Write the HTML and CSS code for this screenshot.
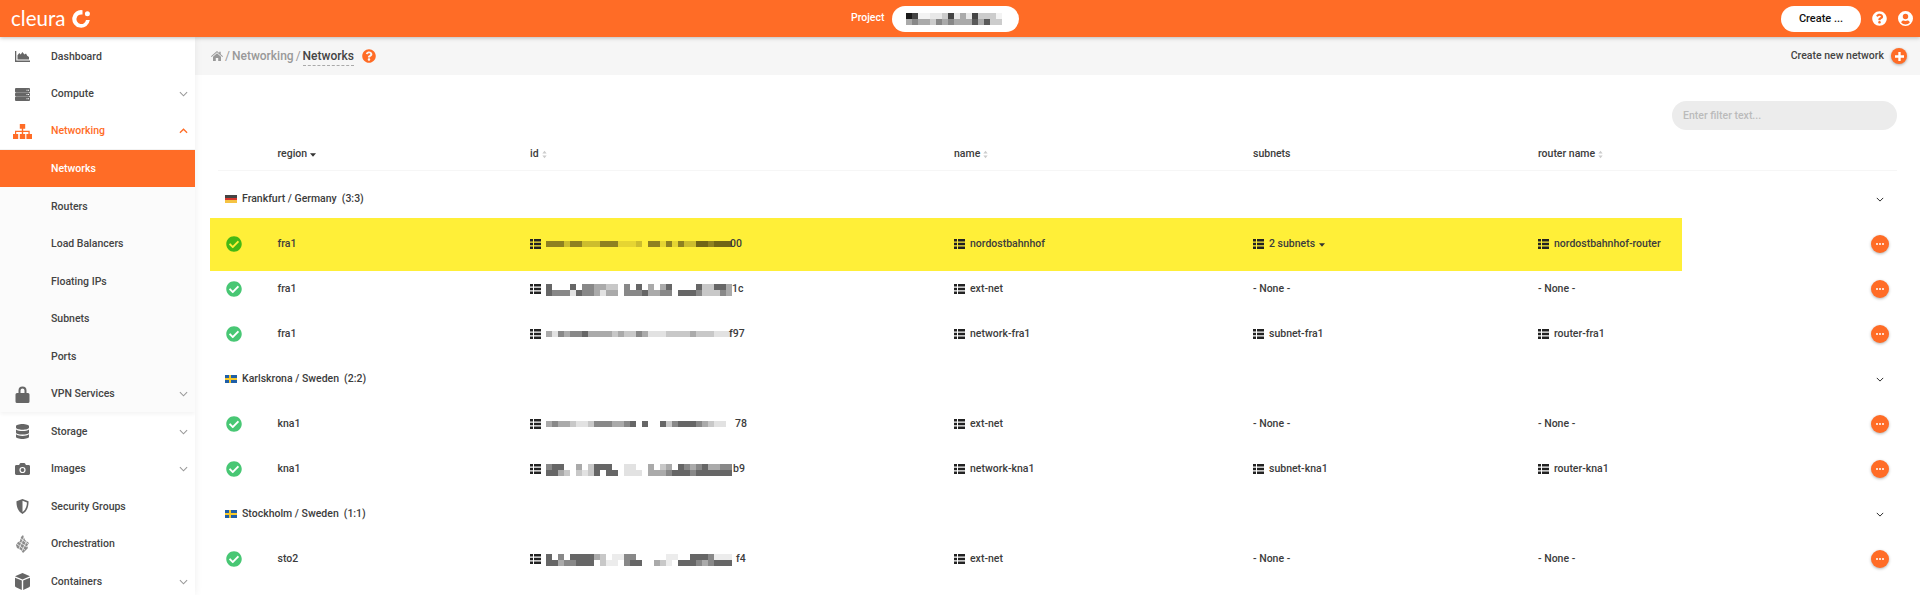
FILE: index.html
```html
<!DOCTYPE html>
<html lang="en">
<head>
<meta charset="utf-8">
<title>Networks</title>
<link rel="stylesheet" href="styles.css">
</head>
<body>
<svg class="sprite" aria-hidden="true">
  <symbol id="i-check" viewBox="0 0 512 512"><path d="M504 256c0 136.967-111.033 248-248 248S8 392.967 8 256 119.033 8 256 8s248 111.033 248 248zM227.314 387.314l184-184c6.248-6.248 6.248-16.379 0-22.627l-22.627-22.627c-6.248-6.249-16.379-6.249-22.628 0L216 308.118l-70.059-70.059c-6.248-6.248-16.379-6.248-22.628 0l-22.627 22.627c-6.248 6.248-6.248 16.379 0 22.627l104 104c6.249 6.249 16.379 6.249 22.628.001z"/></symbol>
  <symbol id="i-help" viewBox="0 0 512 512"><path d="M504 256c0 136.997-111.043 248-248 248S8 392.997 8 256C8 119.083 119.043 8 256 8s248 111.083 248 248zM262.655 90c-54.497 0-89.255 22.957-116.549 63.758-3.536 5.286-2.353 12.415 2.715 16.258l34.699 26.31c5.205 3.947 12.621 3.008 16.665-2.122 17.864-22.658 30.113-35.797 57.303-35.797 20.429 0 45.698 13.148 45.698 32.958 0 14.976-12.363 22.667-32.534 33.976C247.128 238.528 216 254.941 216 296v4c0 6.627 5.373 12 12 12h56c6.627 0 12-5.373 12-12v-1.333c0-28.462 83.186-29.647 83.186-106.667 0-58.002-60.165-102-116.531-102zM256 338c-25.365 0-46 20.635-46 46 0 25.364 20.635 46 46 46s46-20.636 46-46c0-25.365-20.635-46-46-46z"/></symbol>
  <symbol id="i-list" viewBox="0 0 11 10"><path d="M0 0h3v2.600H0zM4 0h7v2.600H4zM0 3.700h3v2.600H0zM4 3.700h7v2.600H4zM0 7.400h3V10H0zM4 7.400h7V10H4z"/></symbol>
  <symbol id="i-down" viewBox="0 0 10 6"><path d="M1 1l4 4 4-4" fill="none" stroke="currentColor" stroke-width="1.200"/></symbol>
  <symbol id="i-up" viewBox="0 0 10 6"><path d="M1 5l4-4 4 4" fill="none" stroke="currentColor" stroke-width="1.400"/></symbol>
  <symbol id="i-sort" viewBox="0 0 6 9"><path d="M3 0l2.600 3.400H.4zM3 9L.4 5.600h5.200z"/></symbol>
  <symbol id="i-caret" viewBox="0 0 6 4"><path d="M0 .3h6L3 3.700z"/></symbol>
  <symbol id="i-chart" viewBox="0 0 15 11"><path d="M0 0h1.300v9.600H15V11H0zM2.500 8.600V4.200L4.300 2l1.400 1.600L7.400 1l2 2.400 1.600-.9 1.200 2.200 1.800 1.200v2.700z"/></symbol>
  <symbol id="i-server" viewBox="0 0 15 13"><path fill-rule="evenodd" d="M1 0h13a1 1 0 0 1 1 1v2.400a1 1 0 0 1-1 1H1a1 1 0 0 1-1-1V1a1 1 0 0 1 1-1zm10.500 1.700v1h1v-1zm1.500 0v1h1v-1zM1 4.800h13a1 1 0 0 1 1 1v1.400a1 1 0 0 1-1 1H1a1 1 0 0 1-1-1V5.800a1 1 0 0 1 1-1zm10.500 1.200v1h1V6zm1.500 0v1h1V6zM1 8.600h13a1 1 0 0 1 1 1V12a1 1 0 0 1-1 1H1a1 1 0 0 1-1-1V9.600a1 1 0 0 1 1-1zm10.500 1.700v1h1v-1zm1.500 0v1h1v-1z"/></symbol>
  <symbol id="i-sitemap" viewBox="0 0 19 15"><path d="M6.800 0h5.400v4.800h-2v1.900h6.500v3.200h2.300V15h-5.600V9.900h2V8H10.200v1.900h2V15H6.800V9.900h2V8H3.200v1.900h2V15H0V9.900h2V6.700h6.800V4.800h-2z"/></symbol>
  <symbol id="i-lock" viewBox="0 0 14 17"><path d="M3 7V4.500a4 4 0 0 1 8 0V7h1.500A1.500 1.500 0 0 1 14 8.500v7a1.500 1.500 0 0 1-1.500 1.500h-11A1.500 1.500 0 0 1 0 15.500v-7A1.500 1.500 0 0 1 1.500 7zm2 0h4V4.500a2 2 0 0 0-4 0z"/></symbol>
  <symbol id="i-db" viewBox="0 0 13 15"><path d="M6.500 0C10 0 13 1 13 2.200v1.300C13 4.800 10 5.800 6.500 5.800S0 4.800 0 3.500V2.200C0 1 3 0 6.500 0zM0 5.400C1.400 6.600 4 7 6.500 7S11.600 6.600 13 5.400v3C13 9.700 10 10.600 6.500 10.600S0 9.700 0 8.400zM0 10.200c1.400 1.200 4 1.700 6.500 1.700s5.100-.5 6.500-1.700v2.600c0 1.300-3 2.200-6.500 2.200S0 14.100 0 12.800z"/></symbol>
  <symbol id="i-camera" viewBox="0 0 15 12"><path fill-rule="evenodd" d="M1.400 2h2.700l.6-1.300A1.200 1.200 0 0 1 5.800 0h3.400c.5 0 .9.300 1.100.7l.6 1.300h2.700c.8 0 1.400.6 1.400 1.400v7.200c0 .8-.6 1.400-1.400 1.400H1.400C.6 12 0 11.400 0 10.600V3.400C0 2.600.6 2 1.400 2zm6.100 1.900a3.100 3.100 0 1 0 0 6.200 3.100 3.100 0 0 0 0-6.200zm0 1.200a1.900 1.900 0 1 1 0 3.800 1.900 1.900 0 0 1 0-3.800z"/></symbol>
  <symbol id="i-shield" viewBox="0 0 13 15"><path fill-rule="evenodd" d="M6.500 0l6 2.300c.3 5-1.500 10.300-6 12.700C2 12.600.2 7.300.5 2.300zm0 1.800v11.200c3-1.900 4.500-5.900 4.400-9.500z"/></symbol>
  <symbol id="i-orch" viewBox="0 0 13 18"><path d="M7 0l2 5 4 3-2 3 1 2-5 5-2-3-4-2-1-3 2-3 2-1 1-4z" opacity=".75"/><path d="M2 6l9 6M1 9l8 6M4 3l8 6M8 2L3 14M11 5L6 16" fill="none" stroke="#fff" stroke-width=".7"/></symbol>
  <symbol id="i-cube" viewBox="0 0 15 17"><path d="M7.500 0L15 3.200 7.500 6.400 0 3.200zM0 4.700l6.800 2.900V17L1 14.300a1.600 1.600 0 0 1-1-1.500zM15 4.700v8.100c0 .7-.4 1.200-1 1.500L8.200 17V7.600z"/></symbol>
</svg>

<header class="topbar">
  <div class="brand">
    <span class="brand-name">cleura</span>
    <svg class="brand-mark" viewBox="0 0 18 18"><path d="M10.500 4.600A4.800 4.800 0 1 0 14 10h3.800A8.800 8.800 0 1 1 10.500.2z" fill="#fff"/><circle cx="15.400" cy="3.800" r="2.500" fill="#fff"/></svg>
  </div>
  <span class="project-label">Project</span>
  <div class="project-pill">
    <svg class="mosaic mosaic-project" viewBox="0 0 16 2" shape-rendering="crispEdges">
      <path stroke="#1a1a1a" d="M0 .5h1"/><path stroke="#444" d="M1 .5h1M7 .5h1M11 .5h1"/>
      <path stroke="#f3f3f3" d="M2 .5h2M15 .5h1"/><path stroke="#e8e8e8" d="M4 .5h2M8 .5h1M10 .5h1"/>
      <path stroke="#ccc" d="M6 .5h1M12 .5h2M14 .5h1M4 1.500h1M14 1.500h2"/><path stroke="#aaa" d="M9 .5h1M0 1.500h1M2 1.500h2M6 1.500h1M8 1.500h3M12 1.500h1"/>
      <path stroke="#888" d="M1 1.500h1M5 1.500h1M7 1.500h1"/><path stroke="#595959" d="M11 1.500h1M13 1.500h1"/>
    </svg>
  </div>
  <button class="create-btn" type="button">Create ...</button>
  <svg class="top-icon"><use href="#i-help"/></svg>
  <svg class="top-icon user-icon" viewBox="0 0 16 16"><path fill-rule="evenodd" d="M8 0a8 8 0 1 1 0 16A8 8 0 0 1 8 0zm0 3a2.900 2.900 0 1 0 0 5.800A2.900 2.900 0 0 0 8 3zM3.400 12.200C4.500 13.500 6.200 14.300 8 14.300s3.500-.8 4.600-2.100c-.4-1.400-1.500-2-2.600-2-.6.2-1.300.4-2 .4s-1.400-.2-2-.4c-1.100 0-2.200.6-2.600 2z"/></svg>
</header>

<div class="app">
  <nav class="sidebar">
    <a class="nav-item"><svg class="nav-icon ic-chart"><use href="#i-chart"/></svg><span>Dashboard</span></a>
    <a class="nav-item"><svg class="nav-icon ic-server"><use href="#i-server"/></svg><span>Compute</span><svg class="chev"><use href="#i-down"/></svg></a>
    <a class="nav-item nav-open"><svg class="nav-icon ic-sitemap"><use href="#i-sitemap"/></svg><span>Networking</span><svg class="chev"><use href="#i-up"/></svg></a>
    <a class="nav-item nav-active"><span class="nav-sub">Networks</span></a>
    <div class="nav-group">
      <a class="nav-item"><span class="nav-sub">Routers</span></a>
      <a class="nav-item"><span class="nav-sub">Load Balancers</span></a>
      <a class="nav-item"><span class="nav-sub">Floating IPs</span></a>
      <a class="nav-item"><span class="nav-sub">Subnets</span></a>
      <a class="nav-item"><span class="nav-sub">Ports</span></a>
      <a class="nav-item"><svg class="nav-icon ic-lock"><use href="#i-lock"/></svg><span>VPN Services</span><svg class="chev"><use href="#i-down"/></svg></a>
    </div>
    <a class="nav-item"><svg class="nav-icon ic-db"><use href="#i-db"/></svg><span>Storage</span><svg class="chev"><use href="#i-down"/></svg></a>
    <a class="nav-item"><svg class="nav-icon ic-camera"><use href="#i-camera"/></svg><span>Images</span><svg class="chev"><use href="#i-down"/></svg></a>
    <a class="nav-item"><svg class="nav-icon ic-shield"><use href="#i-shield"/></svg><span>Security Groups</span></a>
    <a class="nav-item"><svg class="nav-icon ic-orch"><use href="#i-orch"/></svg><span>Orchestration</span></a>
    <a class="nav-item"><svg class="nav-icon ic-cube"><use href="#i-cube"/></svg><span>Containers</span><svg class="chev"><use href="#i-down"/></svg></a>
  </nav>

  <main class="main">
    <div class="crumbs">
      <svg class="crumb-home" viewBox="0 0 12 10"><path d="M6 0l2.200 1.900V.8h1.500v2.400L12 5.200l-.6.7L6 1.300.6 5.900 0 5.200zM6 2.300l4 3.400V10H7.200V7H4.800v3H2V5.700z"/></svg>
      <span class="crumb-sep">/</span>
      <span class="crumb-link">Networking</span>
      <span class="crumb-sep">/</span>
      <span class="crumb-current">Networks</span>
      <svg class="crumb-help"><use href="#i-help"/></svg>
      <span class="crumb-action">Create new network</span>
      <span class="plus-btn"><svg viewBox="0 0 10 10"><path d="M3.700 0h2.600v3.700H10v2.600H6.300V10H3.700V6.300H0V3.700h3.700z"/></svg></span>
    </div>

    <div class="content">
      <div class="filter-row"><input class="filter" type="text" placeholder="Enter filter text..."></div>

      <div class="row head">
        <span></span>
        <span class="th">region <svg class="caret"><use href="#i-caret"/></svg></span>
        <span class="th">id <svg class="sort"><use href="#i-sort"/></svg></span>
        <span class="th">name <svg class="sort"><use href="#i-sort"/></svg></span>
        <span class="th">subnets</span>
        <span class="th">router name <svg class="sort"><use href="#i-sort"/></svg></span>
      </div>

      <div class="group first">
        <svg class="flag" viewBox="0 0 12 8" shape-rendering="crispEdges"><path fill="#444" d="M0 0h12v2.700H0z"/><path fill="#d8372c" d="M0 2.700h12v2.700H0z"/><path fill="#f5c343" d="M0 5.400h12V8H0z"/></svg>
        <span>Frankfurt / Germany</span><span class="count">(3:3)</span>
        <svg class="group-chev"><use href="#i-down"/></svg>
      </div>

      <div class="row hit">
        <svg class="status"><use href="#i-check"/></svg>
        <span>fra1</span>
        <span class="cell"><svg class="list"><use href="#i-list"/></svg>
          <svg class="mosaic one" viewBox="0 0 31 1" shape-rendering="crispEdges">
            <path stroke="#8f8120" d="M0 .5h3M4 .5h2M9 .5h3M17 .5h2M20 .5h1M22 .5h1M27 .5h1"/>
            <path stroke="#cdbd2d" d="M3 .5h1M6 .5h3M15 .5h1M23 .5h2"/>
            <path stroke="#e6d532" d="M12 .5h3M19 .5h1M21 .5h1"/>
            <path stroke="#716515" d="M25 .5h2M28 .5h3"/>
          </svg><span class="tail">00</span></span>
        <span class="cell"><svg class="list"><use href="#i-list"/></svg>nordostbahnhof</span>
        <span class="cell"><svg class="list"><use href="#i-list"/></svg>2 subnets <svg class="caret"><use href="#i-caret"/></svg></span>
        <span class="cell"><svg class="list"><use href="#i-list"/></svg>nordostbahnhof-router</span>
        <span class="more"><i></i><i></i><i></i></span>
      </div>

      <div class="row">
        <svg class="status"><use href="#i-check"/></svg>
        <span>fra1</span>
        <span class="cell"><svg class="list"><use href="#i-list"/></svg>
          <svg class="mosaic two" viewBox="0 0 31 2" shape-rendering="crispEdges">
            <path stroke="#666" d="M0 .5h1M4 .5h1M15 .5h1M20 .5h1M25 .5h1M28 .5h2M0 1.500h1M5 1.500h1M16 1.500h1M22 1.500h3"/>
            <path stroke="#888" d="M6 .5h2M13 .5h1M1 1.500h3M6 1.500h2M13 1.500h3M19 1.500h2M25 1.500h1M29 1.500h1"/>
            <path stroke="#aaa" d="M8 .5h2M17 .5h1M19 .5h1M30 .5h1M8 1.500h1M10 1.500h2M17 1.500h2M30 1.500h1"/>
            <path stroke="#c8c8c8" d="M10 .5h2M26 .5h2M26 1.500h3"/>
            <path stroke="#e2e2e2" d="M4 1.500h1M9 1.500h1"/>
          </svg><span class="tail narrow">1c</span></span>
        <span class="cell"><svg class="list"><use href="#i-list"/></svg>ext-net</span>
        <span>- None -</span>
        <span>- None -</span>
        <span class="more"><i></i><i></i><i></i></span>
      </div>

      <div class="row">
        <svg class="status"><use href="#i-check"/></svg>
        <span>fra1</span>
        <span class="cell"><svg class="list"><use href="#i-list"/></svg>
          <svg class="mosaic one" viewBox="0 0 31 1" shape-rendering="crispEdges">
            <path stroke="#666" d="M6 .5h1"/>
            <path stroke="#888" d="M2 .5h1M4 .5h2M15 .5h1"/>
            <path stroke="#aaa" d="M0 .5h1M3 .5h1M7 .5h4M12 .5h1M16 .5h1M24 .5h1"/>
            <path stroke="#c8c8c8" d="M11 .5h1M13 .5h2M20 .5h4M25 .5h3"/>
            <path stroke="#e2e2e2" d="M1 .5h1M17 .5h3M28 .5h3"/>
          </svg><span class="tail tight">f97</span></span>
        <span class="cell"><svg class="list"><use href="#i-list"/></svg>network-fra1</span>
        <span class="cell"><svg class="list"><use href="#i-list"/></svg>subnet-fra1</span>
        <span class="cell"><svg class="list"><use href="#i-list"/></svg>router-fra1</span>
        <span class="more"><i></i><i></i><i></i></span>
      </div>

      <div class="group">
        <svg class="flag" viewBox="0 0 12 8" shape-rendering="crispEdges"><path fill="#1f5fa8" d="M0 0h12v8H0z"/><path fill="#f6c92c" d="M3.500 0h2v8h-2zM0 3h12v2H0z"/></svg>
        <span>Karlskrona / Sweden</span><span class="count">(2:2)</span>
        <svg class="group-chev"><use href="#i-down"/></svg>
      </div>

      <div class="row">
        <svg class="status"><use href="#i-check"/></svg>
        <span>kna1</span>
        <span class="cell"><svg class="list"><use href="#i-list"/></svg>
          <svg class="mosaic one" viewBox="0 0 31 1" shape-rendering="crispEdges">
            <path stroke="#666" d="M14 .5h1M16 .5h1M19 .5h1M22 .5h3"/>
            <path stroke="#888" d="M1 .5h1M8 .5h3M13 .5h1M21 .5h1M25 .5h1"/>
            <path stroke="#aaa" d="M0 .5h1M2 .5h2M11 .5h2M26 .5h1"/>
            <path stroke="#c8c8c8" d="M4 .5h1M7 .5h1M27 .5h1M20 .5h1"/>
            <path stroke="#e2e2e2" d="M5 .5h2M28 .5h2"/>
          </svg><span class="tail wide">78</span></span>
        <span class="cell"><svg class="list"><use href="#i-list"/></svg>ext-net</span>
        <span>- None -</span>
        <span>- None -</span>
        <span class="more"><i></i><i></i><i></i></span>
      </div>

      <div class="row">
        <svg class="status"><use href="#i-check"/></svg>
        <span>kna1</span>
        <span class="cell"><svg class="list"><use href="#i-list"/></svg>
          <svg class="mosaic two" viewBox="0 0 31 2" shape-rendering="crispEdges">
            <path stroke="#666" d="M1 .5h2M8 .5h3M22 .5h1M26 .5h1M0 1.500h2M8 1.500h1M10 1.500h2M21 1.500h3M25 1.500h6"/>
            <path stroke="#888" d="M0 .5h1M23 .5h1M24 1.500h1M20 1.500h1M29 .5h2M25 .5h1"/>
            <path stroke="#aaa" d="M5 .5h1M17 .5h1M20 .5h1M2 1.500h1M17 1.500h3M24 .5h1M27 .5h2"/>
            <path stroke="#c8c8c8" d="M7 .5h1M19 .5h1M3 1.500h1M5 1.500h1M7 1.500h1"/>
            <path stroke="#e2e2e2" d="M13 .5h2M6 1.500h1M13 1.500h3"/>
          </svg><span class="tail flush">b9</span></span>
        <span class="cell"><svg class="list"><use href="#i-list"/></svg>network-kna1</span>
        <span class="cell"><svg class="list"><use href="#i-list"/></svg>subnet-kna1</span>
        <span class="cell"><svg class="list"><use href="#i-list"/></svg>router-kna1</span>
        <span class="more"><i></i><i></i><i></i></span>
      </div>

      <div class="group">
        <svg class="flag" viewBox="0 0 12 8" shape-rendering="crispEdges"><path fill="#1f5fa8" d="M0 0h12v8H0z"/><path fill="#f6c92c" d="M3.500 0h2v8h-2zM0 3h12v2H0z"/></svg>
        <span>Stockholm / Sweden</span><span class="count">(1:1)</span>
        <svg class="group-chev"><use href="#i-down"/></svg>
      </div>

      <div class="row">
        <svg class="status"><use href="#i-check"/></svg>
        <span>sto2</span>
        <span class="cell"><svg class="list"><use href="#i-list"/></svg>
          <svg class="mosaic two wide-mosaic" viewBox="0 0 32 2" shape-rendering="crispEdges">
            <path stroke="#666" d="M0 .5h1M4 .5h4M24 .5h3M0 1.500h2M5 1.500h3M14 1.500h2M22 1.500h3M28 1.500h3"/>
            <path stroke="#888" d="M2 .5h1M13 .5h2M27 .5h1M3 1.500h2M13 1.500h1M25 1.500h1M27 1.500h1"/>
            <path stroke="#aaa" d="M8 .5h1M2 1.500h1M18 1.500h1M26 1.500h1"/>
            <path stroke="#c8c8c8" d="M9 .5h1M9 1.500h1M19 1.500h1"/>
            <path stroke="#ececec" d="M11 .5h2M20 .5h2M28 .5h3M10 1.500h2M20 1.500h1"/>
          </svg><span class="tail">f4</span></span>
        <span class="cell"><svg class="list"><use href="#i-list"/></svg>ext-net</span>
        <span>- None -</span>
        <span>- None -</span>
        <span class="more"><i></i><i></i><i></i></span>
      </div>
    </div>
  </main>
</div>
</body>
</html>
```

FILE: styles.css
```css
* { box-sizing: border-box; }
html, body { height: 100%; }
body {
  margin: 0;
  overflow: hidden;
  background: #fff;
  color: #3c3c3c;
  font: 500 10.5px/1 Roboto, "Liberation Sans", sans-serif;
}
.sprite { display: none; }
svg { display: block; flex: none; fill: currentColor; }

.topbar {
  position: relative;
  z-index: 3;
  height: 37px;
  display: flex;
  align-items: center;
  background: #ff6c26;
  box-shadow: 0 1px 4px rgba(0, 0, 0, .25);
  color: #fff;
  padding-left: 11px;
}
.brand { width: 840px; display: flex; align-items: center; }
.brand-name { font: 400 20.5px/1 Lato, sans-serif; color: #fff; }
.brand-mark { width: 18px; height: 18px; margin-left: 7px; }
.project-label { width: 41px; }
.project-pill {
  width: 127px;
  height: 26px;
  border-radius: 13px;
  background: #fff;
  padding: 7px 0 0 14px;
}
.mosaic-project { width: 96px; height: 12px; }
.mosaic path { fill: none; stroke-width: 1; }
.create-btn {
  margin-left: auto;
  width: 80px;
  height: 26px;
  border: 0;
  border-radius: 13px;
  background: #fff;
  color: #111;
  font: inherit;
  font-size: 11px;
}
.top-icon { width: 15px; height: 15px; margin-left: 11px; }
.user-icon { margin-right: 7px; }

.app { display: flex; height: 558px; }

.sidebar {
  position: relative;
  z-index: 2;
  width: 195px;
  flex: none;
  height: 558px;
  overflow: hidden;
  background: #fff;
  box-shadow: 0 0 8px rgba(0, 0, 0, .07);
}
.nav-item {
  height: 37.5px;
  display: flex;
  align-items: center;
  color: #444;
  padding: 2px 7px 0 0;
}
.nav-item > span { margin-left: 6px; }
.nav-item > .nav-sub { margin-left: 51px; }
.nav-icon { width: 45px; color: #666; }
.ic-chart { height: 11px; }
.ic-server { height: 13px; }
.ic-sitemap { height: 15px; }
.ic-lock { height: 17px; }
.ic-db { height: 15px; }
.ic-camera { height: 12px; }
.ic-shield { height: 15px; }
.ic-orch { height: 18px; }
.ic-cube { height: 17px; }
.chev { width: 9px; height: 6px; margin-left: auto; color: #999; }
.nav-open { color: #ff6c26; border-bottom: 1px solid #f2f2f2; }
.nav-open .nav-icon, .nav-open .chev { color: #ff6c26; }
.nav-active { background: #ff6c26; color: #fff; }
.nav-group { background: #fbfbfb; box-shadow: 0 2px 4px rgba(0, 0, 0, .05); }

.main { flex: 1; min-width: 0; }
.crumbs {
  height: 38px;
  display: flex;
  align-items: center;
  background: #f6f6f6;
  padding: 0 13px 0 16px;
  font-size: 12px;
  color: #999;
}
.crumb-home { width: 12px; height: 10px; color: #999; }
.crumb-sep { margin: 0 2px; font-weight: 400; }
.crumb-current { color: #444; border-bottom: 1px dashed #aaa; padding-bottom: 3px; margin-top: 3px; }
.crumb-help { width: 14px; height: 14px; margin-left: 8px; color: #ff6c26; }
.crumb-action { margin-left: auto; font-size: 10.5px; color: #444; }
.plus-btn {
  width: 16px;
  height: 16px;
  margin-left: 7px;
  border-radius: 50%;
  background: #ff6c26;
  display: flex;
  align-items: center;
  justify-content: center;
  box-shadow: 0 1px 3px rgba(0, 0, 0, .3);
}
.plus-btn svg { width: 9px; height: 9px; fill: #fff; }

.content { padding: 26px 23px 0 15px; }
.filter-row { display: flex; justify-content: flex-end; height: 29px; }
.filter {
  width: 225px;
  height: 29px;
  border: 0;
  border-radius: 15px;
  background: #ececec;
  padding: 0 11px;
  font: inherit;
  outline: none;
}
.filter::placeholder { color: #bbb; opacity: 1; }

.row {
  height: 45px;
  display: grid;
  grid-template-columns: 67.5px 252.5px 424px 299px 285px 144px 1fr;
  align-items: center;
}
.head {
  height: 41px;
  padding-top: 8px;
  margin-left: 8px;
  grid-template-columns: 59.5px 252.5px 424px 299px 285px 144px 1fr;
  border-bottom: 1px solid #f6f6f6;
}
.th { display: flex; align-items: center; gap: 3px; }
.caret { width: 6px; height: 4px; margin-top: 2px; color: #333; }
.sort { width: 5px; height: 9px; color: #ccc; }

.group {
  height: 45px;
  display: flex;
  align-items: center;
  padding: 0 13px 0 15px;
}
.group.first { margin-top: 5.5px; }
.flag { width: 12px; height: 8px; margin-right: 5px; }
.count { margin-left: 5px; }
.group-chev { width: 8px; height: 5px; margin-left: auto; color: #222; }

.status { width: 16px; height: 16px; margin-left: 16px; color: #48c774; }
.hit {
  height: 53px;
  margin: -4px 0;
  background: linear-gradient(#ffef38, #ffef38) 0 0 / 1472px 100% no-repeat;
}
.hit .status { color: #45b814; }

.cell { display: flex; align-items: center; white-space: nowrap; }
.list { width: 11px; height: 10px; margin-right: 5px; color: #222; }
.cell .caret { margin-left: 4px; }

.mosaic.one { width: 186px; height: 6px; }
.mosaic.two { width: 186px; height: 13px; }
.mosaic.wide-mosaic { width: 192px; }
.tail { margin-left: -2px; }
.narrow { margin-left: 0; }
.tight { margin-left: -3px; }
.wide { margin-left: 3px; }
.flush { margin-left: 1px; }

.more {
  width: 18px;
  height: 18px;
  margin-left: 189px;
  border-radius: 50%;
  background: #ff6c26;
  display: flex;
  align-items: center;
  justify-content: center;
  gap: 1px;
  box-shadow: 0 1px 3px rgba(0, 0, 0, .3);
}
.more i { width: 2px; height: 2px; border-radius: 50%; background: #fff; }
```
